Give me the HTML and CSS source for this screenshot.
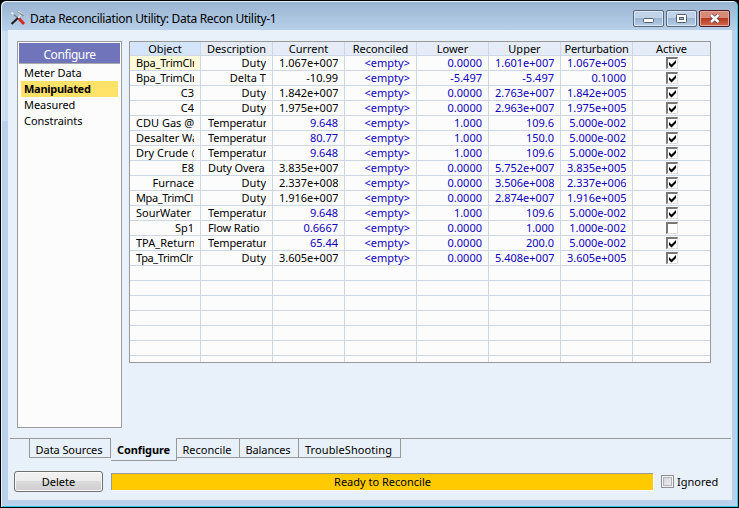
FILE: index.html
```html
<!DOCTYPE html>
<html lang="en">
<head>
<meta charset="utf-8">
<title>Data Reconciliation Utility</title>
<link rel="stylesheet" href="styles.css">
</head>
<body>
<div class="window">
  <header class="titlebar">
    <svg class="app-icon" width="16" height="16" viewBox="0 0 16 16" fill="none">
      <path d="M2 3 L9 9" stroke="#777f88" stroke-width="1.2"/>
      <path d="M1.5 2.5 L3.5 4.5" stroke="#fff" stroke-width="1.4"/>
      <path d="M1.5 14 L8.5 7.5" stroke="#241c1c" stroke-width="2"/>
      <path d="M8 8 L11 5" stroke="#dfe4e9" stroke-width="1.6"/>
      <path d="M7.5 1.5 Q10 1.5 11 3.5 L13.5 6" stroke="#8b9197" stroke-width="2"/>
      <path d="M8 1.5 Q11 1.5 13 4.5" stroke="#f4f6f8" stroke-width="1"/>
      <path d="M9 8.5 L14 14" stroke="#d32b20" stroke-width="3"/>
    </svg>
    <h1 class="title">Data Reconciliation Utility: Data Recon Utility-1</h1>
    <div class="controls">
      <span class="control"><svg width="29" height="15" viewBox="0 0 29 15"><rect x="9.5" y="7.5" width="10" height="4" rx="1" fill="#fff" stroke="#555d6b"/></svg></span>
      <span class="control"><svg width="29" height="15" viewBox="0 0 29 15"><rect x="9.5" y="3.5" width="10" height="8" rx="1" fill="#fff" stroke="#555d6b"/><rect x="12.5" y="6.5" width="4" height="2" fill="#aabed6" stroke="#555d6b"/></svg></span>
      <span class="control close"><svg width="29" height="15" viewBox="0 0 29 15" fill="none"><path d="M11 4 L18.5 11 M18.5 4 L11 11" stroke="#5d4a52" stroke-width="4.2"/><path d="M11 4 L18.5 11 M18.5 4 L11 11" stroke="#fff" stroke-width="2.4"/></svg></span>
    </div>
  </header>
  <main class="client">
    <div class="page">
      <nav class="sidebar">
        <div class="side-head">Configure</div>
        <div class="side-item">Meter Data</div>
        <div class="side-item selected">Manipulated</div>
        <div class="side-item">Measured</div>
        <div class="side-item">Constraints</div>
      </nav>
      <div class="grid" id="grid"></div>
    </div>
    <div class="tabs">
      <div class="tab first">Data Sources</div>
      <div class="tab active">Configure</div>
      <div class="tab t3">Reconcile</div>
      <div class="tab t4">Balances</div>
      <div class="tab t5">TroubleShooting</div>
      <div class="tab-rest"></div>
    </div>
    <footer class="footer">
      <button class="delete">Delete</button>
      <div class="status">Ready to Reconcile</div>
      <label class="ignored"><span class="soft-check"></span>Ignored</label>
    </footer>
  </main>
</div>
<script src="grid.js"></script>
</body>
</html>
```
FILE: grid.js
```js
const heads = ["Object", "Description", "Current", "Reconciled", "Lower", "Upper", "Perturbation", "Active"];
// object, description, current, current is editable, lower, upper, perturbation, active
const rows = [
  ["Bpa_TrimClr", "Duty", "1.067e+007", 0, "0.0000", "1.601e+007", "1.067e+005", 1],
  ["Bpa_TrimClr", "Delta T", "-10.99", 0, "-5.497", "-5.497", "0.1000", 1],
  ["C3", "Duty", "1.842e+007", 0, "0.0000", "2.763e+007", "1.842e+005", 1],
  ["C4", "Duty", "1.975e+007", 0, "0.0000", "2.963e+007", "1.975e+005", 1],
  ["CDU Gas @", "Temperatur", "9.648", 1, "1.000", "109.6", "5.000e-002", 1],
  ["Desalter Wa", "Temperatur", "80.77", 1, "1.000", "150.0", "5.000e-002", 1],
  ["Dry Crude @", "Temperatur", "9.648", 1, "1.000", "109.6", "5.000e-002", 1],
  ["E8", "Duty Overa", "3.835e+007", 0, "0.0000", "5.752e+007", "3.835e+005", 1],
  ["Furnace", "Duty", "2.337e+008", 0, "0.0000", "3.506e+008", "2.337e+006", 1],
  ["Mpa_TrimCl", "Duty", "1.916e+007", 0, "0.0000", "2.874e+007", "1.916e+005", 1],
  ["SourWater ", "Temperatur", "9.648", 1, "1.000", "109.6", "5.000e-002", 1],
  ["Sp1", "Flow Ratio ", "0.6667", 1, "0.0000", "1.000", "1.000e-002", 0],
  ["TPA_Return", "Temperatur", "65.44", 1, "0.0000", "200.0", "5.000e-002", 1],
  ["Tpa_TrimClr", "Duty", "3.605e+007", 0, "0.0000", "5.408e+007", "3.605e+005", 1]
];
const tick = '<svg width="9" height="9" viewBox="0 0 9 9"><path d="M1 3v3l2.5 2.5L8 4V1L3.5 5.5z" fill="#000"/></svg>';
const cell = (text, cls = "") => `<div class="cell ${cls}"><span>${text.replace("<", "&lt;")}</span></div>`;
let html = heads.map((h, i) => cell(h, "head h" + i)).join("");
for (const [obj, desc, cur, edit, low, up, pert, on] of rows) {
  const fit = t => /Trim/.test(t) ? (/^Bpa/.test(t) ? "long tight" : "long tighter")
    : /^(Desalter|Dry|CDU|TPA|Sour)/.test(t) ? "long"
    : /^(Temperatur|Duty O|Flow)/.test(t) ? "long desc" : "";
  html += cell(obj, fit(obj)) + cell(desc, fit(desc)) + cell(cur, edit ? "blue" : "") +
    cell("<empty>", "blue") + cell(low, "blue") + cell(up, "blue") + cell(pert, "blue") +
    `<div class="cell mark"><span class="box">${on ? tick : ""}</span></div>`;
}
html += '<div class="cell"></div>'.repeat(56);
document.getElementById("grid").innerHTML = html;
```
FILE: styles.css
```css
* { box-sizing: border-box; }
body {
  margin: 0;
  background: #000;
  font: 11px/14px "Noto Sans", "Open Sans", sans-serif;
  color: #000;
  overflow: hidden;
}
.window {
  width: 739px;
  height: 508px;
  border: 1px solid #000;
  border-radius: 6px 6px 0 0;
  padding: 0 6px 6px 7px;
  box-shadow: inset 1px 1px 0 #e9f2fb, inset -1px -1px 0 #29cbe4;
  background:
    linear-gradient(90deg, #d3e2f2, #c9dcf0) 0 30px / 7px 90px no-repeat,
    linear-gradient(#98b3d1, #b9d1ea 30px);
}
.titlebar { display: flex; height: 29px; align-items: flex-start; padding-left: 2px; }
.app-icon { margin-top: 9px; flex: none; }
.title {
  margin: 8px 0 0 4px;
  flex: 1;
  font: 12px/19px "Noto Sans", sans-serif;
  letter-spacing: -0.31px;
  white-space: nowrap;
}
.controls { display: flex; gap: 2px; margin: 9px 2px 0 0; }
.control {
  display: flex;
  width: 31px;
  height: 17px;
  border: 1px solid #58677c;
  border-radius: 2px;
  box-shadow: inset 0 0 0 1px #dbe7f4;
  background: linear-gradient(#bfd2e7 50%, #9bb5d2 50%, #b7cde5);
}
.close {
  border-color: #4f1b21;
  box-shadow: inset 0 0 0 1px #e3aaa0;
  background: linear-gradient(#d88a79 50%, #b83a21 50%, #cf6b4b);
}
.client { height: 470px; background: #e8f0fa; }
.page { display: flex; height: 408px; padding: 11px 0 0 9px; gap: 7px; }
.sidebar {
  width: 105px;
  height: 387px;
  border: 1px solid #9c9c9c;
  background: #fcfcfc;
  padding: 1px;
}
.side-head {
  height: 21px;
  margin-bottom: 1px;
  background: #7075bb;
  border-bottom: 1px solid #aaa;
  color: #fff;
  font-size: 12px;
  letter-spacing: -0.4px;
  line-height: 23px;
  text-align: center;
}
.side-item { height: 16px; line-height: 16px; margin: 0 2px; padding-left: 3px; letter-spacing: -0.05px; }
.selected { background: #ffe267; font-weight: bold; letter-spacing: -0.28px; }
.grid {
  width: 582px;
  height: 322px;
  border: 1px solid #999;
  background: #fcfcfc;
  display: grid;
  grid-template-columns: 71px repeat(6, 72px) 77px;
  grid-auto-rows: 15px;
  grid-template-rows: 14px;
  overflow: hidden;
}
.cell {
  border-right: 1px solid #ced7e6;
  border-bottom: 1px solid #ced7e6;
  padding: 0 6px;
  line-height: 14px;
  text-align: right;
  white-space: pre;
  overflow: hidden;
}
.cell:nth-child(8n) { border-right: 0; }
.cell > span { display: block; overflow: hidden; height: 14px; }
.head { background: #e5ecf7; text-align: center; padding: 0; line-height: 13px; }
.h0 { background: #d4e4fb; }
.h6 { letter-spacing: -0.15px; }
.cell:nth-child(9) { background: #fffbd8; }
.long { text-align: left; }
.tight { letter-spacing: -0.2px; }
.tighter { letter-spacing: -0.4px; }
.desc { padding-left: 7px; letter-spacing: -0.15px; }
.blue { color: #0f00bd; }
.mark { display: flex; justify-content: center; align-items: center; }
.mark .box {
  width: 12px;
  height: 12px;
  background: #fff;
  border: 1px solid #e0e0e0;
  border-top: 2px solid #777;
  border-left: 2px solid #777;
}
.box svg { display: block; }
.tabs { display: flex; height: 24px; padding-left: 21px; position: relative; }
.tabs::before { content: ""; position: absolute; left: 2px; top: 0; width: 20px; border-top: 1px solid #999; }
.tab {
  height: 20px;
  border: 1px solid #999;
  border-left: 0;
  padding-right: 2px;
  text-align: center;
  line-height: 22px;
  white-space: nowrap;
}
.first { width: 82px; border-left: 1px solid #999; letter-spacing: -0.08px; }
.active { width: 66px; height: 23px; padding-right: 0; border-top: 0; font-weight: bold; line-height: 24px; letter-spacing: -0.1px; }
.t3 { width: 63px; }
.t4 { width: 59px; letter-spacing: -0.1px; }
.t5 { width: 102px; letter-spacing: 0.1px; }
.tab-rest { flex: 1; margin-right: 1px; border-top: 1px solid #999; }
.footer { display: flex; padding: 9px 0 0 6px; align-items: flex-start; }
.delete {
  width: 89px;
  height: 21px;
  padding: 0;
  border: 1px solid #707070;
  border-radius: 3px;
  box-shadow: inset 0 0 0 1px #fafafa;
  background: linear-gradient(#f2f2f2, #ebebeb 50%, #dadada 50%, #cfcfcf);
  color: #000;
  font: inherit;
}
.status {
  width: 542px;
  height: 17px;
  margin: 2px 0 0 8px;
  border-top: 1px solid #999;
  border-left: 1px solid #999;
  background: #ffca00;
  box-shadow: 1px 1px 0 #fff;
  line-height: 16px;
  text-align: center;
}
.ignored { display: flex; margin: 4px 0 0 8px; gap: 3px; }
.soft-check {
  width: 13px;
  height: 13px;
  border: 1px solid #8e8f8f;
  box-shadow: inset 0 0 0 1px #f4f4f4, inset 0 0 0 2px #b3b7bd;
  background: linear-gradient(135deg, #cbcfd5, #f6f6f6);
}
```
